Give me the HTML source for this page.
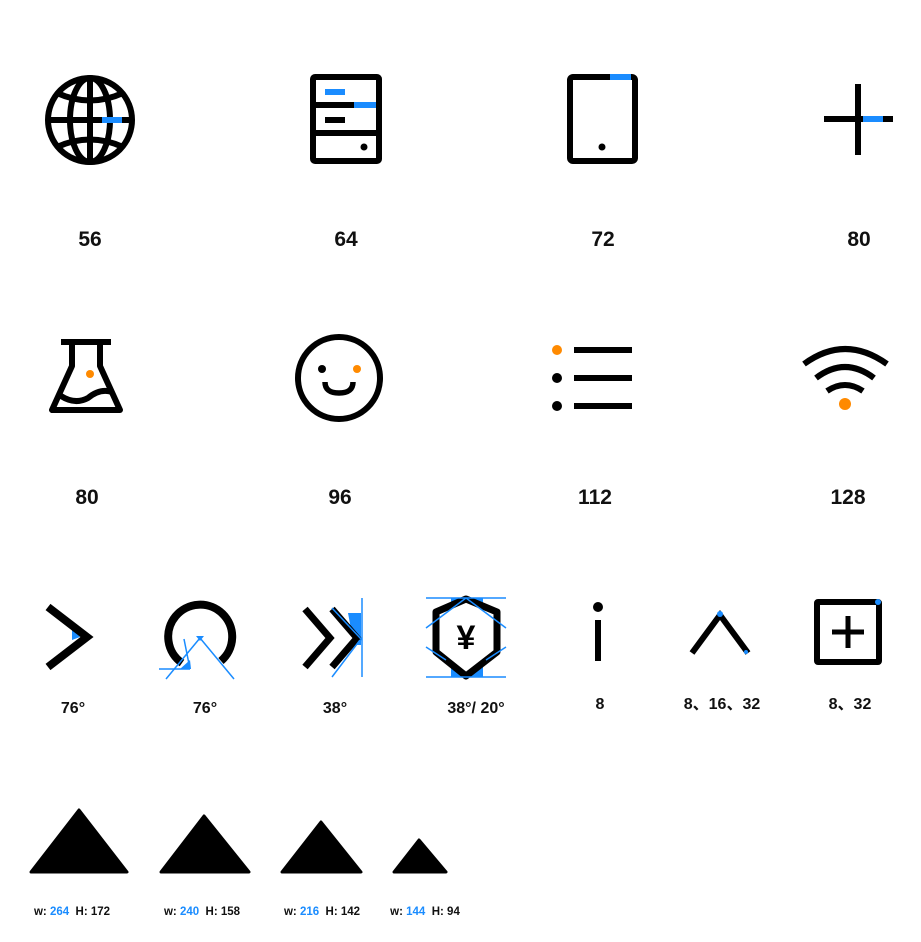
<!DOCTYPE html>
<html><head><meta charset="utf-8"><style>
html,body{margin:0;padding:0;background:#fff;width:921px;height:942px;overflow:hidden}
svg{position:absolute;left:0;top:0}
.l{position:absolute;font-family:"Liberation Sans","Noto Sans CJK SC",sans-serif;font-weight:bold;color:#111;transform:translateX(-50%);white-space:nowrap;line-height:1}
.a{font-size:21px}
.b{font-size:16px}
.c{font-size:11.5px}
.bl{color:#1a8cff}
</style></head><body>
<svg width="921" height="942" viewBox="0 0 921 942" fill="none" stroke-linecap="butt">
<g stroke="#000" stroke-width="6">
<circle cx="90" cy="120" r="42"/>
<line x1="48" y1="120" x2="132" y2="120"/>
<line x1="90" y1="78" x2="90" y2="162"/>
<ellipse cx="90" cy="120" rx="20" ry="42"/>
<path d="M57 93 Q90 108 123 93"/>
<path d="M57 147 Q90 132 123 147"/>
</g>
<line x1="102" y1="120" x2="122" y2="120" stroke="#1a8cff" stroke-width="6"/>
<g stroke="#000" stroke-width="6">
<rect x="313" y="77" width="66" height="84" rx="2"/>
<line x1="313" y1="105" x2="354" y2="105"/>
<line x1="313" y1="133" x2="379" y2="133"/>
<line x1="325" y1="120" x2="345" y2="120"/>
</g>
<line x1="325" y1="92" x2="345" y2="92" stroke="#1a8cff" stroke-width="6"/>
<line x1="354" y1="105" x2="376" y2="105" stroke="#1a8cff" stroke-width="6"/>
<circle cx="364" cy="147" r="3.5" fill="#000"/>
<rect x="570" y="77" width="65" height="84" rx="3" stroke="#000" stroke-width="6"/>
<line x1="610" y1="77" x2="631" y2="77" stroke="#1a8cff" stroke-width="6"/>
<circle cx="602" cy="147" r="3.5" fill="#000"/>
<g stroke="#000" stroke-width="6">
<line x1="858" y1="84" x2="858" y2="155"/>
<line x1="824" y1="119" x2="893" y2="119"/>
</g>
<line x1="863" y1="119" x2="883" y2="119" stroke="#1a8cff" stroke-width="6"/>
<g stroke="#000" stroke-width="6" stroke-linejoin="round">
<line x1="61" y1="342" x2="111" y2="342"/>
<path d="M72 342 V366 L52 410 H120 L100 366 V342"/>
<path d="M61 396 Q75 405 88 398 Q100 388 112 392"/>
</g>
<circle cx="90" cy="374" r="4" fill="#ff8a00"/>
<circle cx="339" cy="378" r="41" stroke="#000" stroke-width="6"/>
<circle cx="322" cy="369" r="4" fill="#000"/>
<circle cx="357" cy="369" r="4" fill="#ff8a00"/>
<path d="M325 382 Q325 393 339 393 Q353 393 353 382" stroke="#000" stroke-width="5.5"/>
<circle cx="557" cy="350" r="5" fill="#ff8a00"/>
<circle cx="557" cy="378" r="5" fill="#000"/>
<circle cx="557" cy="406" r="5" fill="#000"/>
<g stroke="#000" stroke-width="6">
<line x1="574" y1="350" x2="632" y2="350"/><line x1="574" y1="378" x2="632" y2="378"/><line x1="574" y1="406" x2="632" y2="406"/>
</g>
<g stroke="#000" stroke-width="6">
<path d="M804 364 Q845 334 887 364"/>
<path d="M816 378 Q845 356 874 378"/>
<path d="M827 391 Q845 379 863 391"/>
</g>
<circle cx="845" cy="404" r="6" fill="#ff8a00"/>
<polygon points="72,626 80,637 72,640" fill="#1a8cff"/>
<path d="M48 607 L87 637 L48 667" stroke="#000" stroke-width="8" stroke-linejoin="miter"/>
<path d="M182 663 A32 32 0 1 1 221 661" stroke="#000" stroke-width="8"/>
<g stroke="#1a8cff" stroke-width="1.5">
<line x1="159" y1="669" x2="190" y2="669"/>
<line x1="166" y1="679" x2="200" y2="638"/>
<line x1="200" y1="638" x2="234" y2="679"/>
<line x1="184" y1="639" x2="190" y2="669"/>
</g>
<polygon points="196,636 204,636 200,641" fill="#1a8cff"/>
<polygon points="180,669 190,660 191,669" fill="#1a8cff"/>
<polygon points="348,613 361,613 361,645 354,645" fill="#1a8cff"/>
<g stroke="#000" stroke-width="7">
<path d="M305 609 L330 638 L305 667"/>
<path d="M332 609 L357 638 L332 667"/>
</g>
<g stroke="#1a8cff" stroke-width="1.5"><line x1="362" y1="598" x2="362" y2="677"/><line x1="332" y1="608" x2="362" y2="640"/><line x1="332" y1="677" x2="360" y2="640"/></g>
<rect x="451" y="598" width="32" height="10" fill="#1a8cff"/>
<rect x="451" y="665" width="32" height="12" fill="#1a8cff"/>
<path d="M436 612 L466 599 L497 612 V652 L466 676 L436 652 Z" stroke="#000" stroke-width="7" stroke-linejoin="round" fill="#fff"/>
<g stroke="#1a8cff" stroke-width="1.5">
<line x1="426" y1="598" x2="506" y2="598"/><line x1="426" y1="677" x2="506" y2="677"/>
<line x1="426" y1="628" x2="466" y2="598"/><line x1="466" y1="598" x2="506" y2="628"/>
<line x1="426" y1="647" x2="446" y2="660"/><line x1="506" y1="647" x2="486" y2="660"/>
</g>
<text x="466" y="649" font-family="Liberation Sans,sans-serif" font-weight="bold" font-size="34" fill="#000" text-anchor="middle">¥</text>
<circle cx="598" cy="607" r="5" fill="#000"/>
<line x1="598" y1="620" x2="598" y2="661" stroke="#000" stroke-width="6"/>
<path d="M692 653 L720 615 L748 653" stroke="#000" stroke-width="6"/>
<circle cx="720" cy="614" r="3" fill="#1a8cff"/>
<circle cx="746" cy="652" r="2" fill="#1a8cff"/>
<rect x="817" y="602" width="62" height="60" rx="1" stroke="#000" stroke-width="6"/>
<g stroke="#000" stroke-width="5"><line x1="832" y1="632" x2="864" y2="632"/><line x1="848" y1="616" x2="848" y2="648"/></g>
<circle cx="878" cy="602" r="3" fill="#1a8cff"/>
<g fill="#000" stroke="#000" stroke-width="3" stroke-linejoin="round">
<polygon points="31,872 79,810 127,872"/>
<polygon points="161,872 204,816 249,872"/>
<polygon points="282,872 321,822 361,872"/>
<polygon points="394,872 419,840 446,872"/>
</g>
</svg>
<div class="l a" style="left:90px;top:229px">56</div>
<div class="l a" style="left:346px;top:229px">64</div>
<div class="l a" style="left:603px;top:229px">72</div>
<div class="l a" style="left:859px;top:229px">80</div>
<div class="l a" style="left:87px;top:487px">80</div>
<div class="l a" style="left:340px;top:487px">96</div>
<div class="l a" style="left:595px;top:487px">112</div>
<div class="l a" style="left:848px;top:487px">128</div>
<div class="l b" style="left:73px;top:701px">76°</div>
<div class="l b" style="left:205px;top:701px">76°</div>
<div class="l b" style="left:335px;top:701px">38°</div>
<div class="l b" style="left:476px;top:701px">38°/ 20°</div>
<div class="l b" style="left:600px;top:697px">8</div>
<div class="l b" style="left:722px;top:697px">8、16、32</div>
<div class="l b" style="left:850px;top:697px">8、32</div>
<div class="l c" style="left:72px;top:907px">w: <span class="bl">264</span>&nbsp; H: 172</div>
<div class="l c" style="left:202px;top:907px">w: <span class="bl">240</span>&nbsp; H: 158</div>
<div class="l c" style="left:322px;top:907px">w: <span class="bl">216</span>&nbsp; H: 142</div>
<div class="l c" style="left:425px;top:907px">w: <span class="bl">144</span>&nbsp; H: 94</div>
</body></html>
